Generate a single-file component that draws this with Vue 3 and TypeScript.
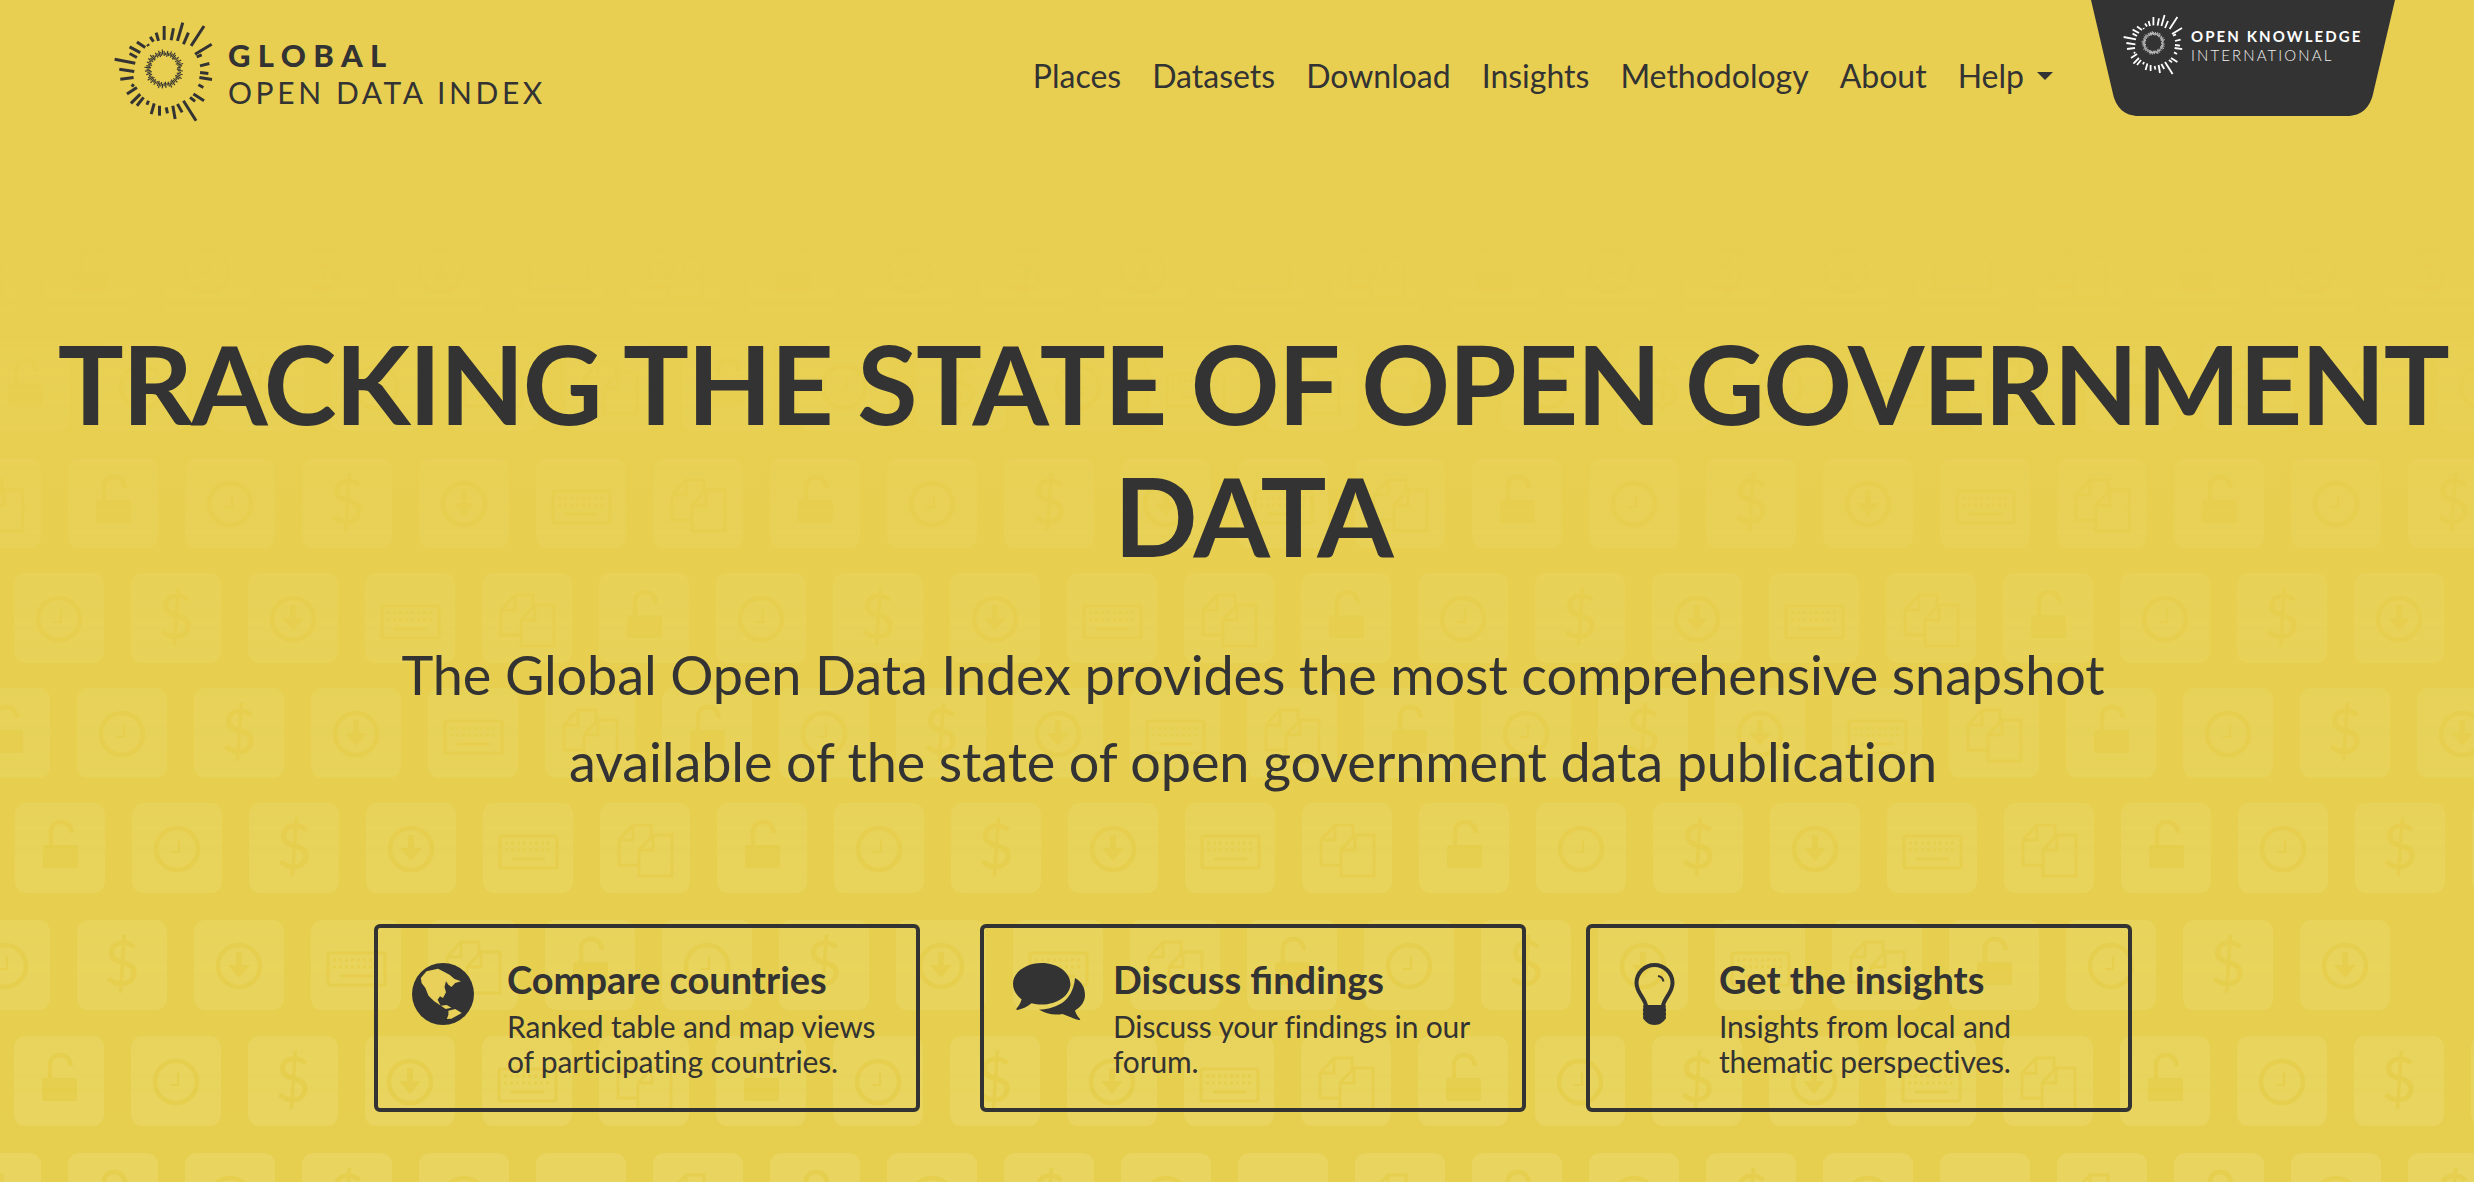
<script setup lang="ts">
const navItems = ['Places', 'Datasets', 'Download', 'Insights', 'Methodology', 'About']

// rays of the sunburst logo, drawn at 3x, centre at 222,215
const rays = [
  [222, 127, 222, 85], [243, 128, 250, 92], [262, 130, 278, 75], [280, 140, 295, 105], [303, 145, 342, 85],
  [315, 170, 365, 140], [320, 178, 335, 172], [330, 205, 358, 198], [330, 225, 355, 228], [328, 240, 366, 246],
  [325, 262, 340, 270], [310, 290, 342, 310], [300, 300, 315, 312], [280, 310, 318, 370], [262, 320, 276, 345],
  [248, 325, 255, 365], [228, 330, 232, 348], [208, 325, 208, 355], [192, 318, 183, 350], [175, 310, 170, 322],
  [160, 300, 140, 325], [150, 290, 122, 318], [140, 270, 110, 290], [130, 260, 125, 268], [130, 240, 90, 245],
  [132, 222, 87, 215], [135, 197, 73, 185], [140, 180, 118, 168], [150, 165, 118, 148], [165, 150, 140, 133],
  [175, 145, 172, 140], [190, 132, 180, 118], [205, 130, 198, 105],
]

const ticks = Array.from({ length: 64 }, (_, i) => {
  const a = (i / 64) * Math.PI * 2
  const inner = 38 + ((i * 7) % 5) * 1.5
  const outer = 50 + ((i * 11) % 7) * 1.6
  return [
    222 + Math.cos(a) * inner,
    215 + Math.sin(a) * inner,
    222 + Math.cos(a) * outer,
    215 + Math.sin(a) * outer,
  ]
})

// background tiles: every row is the same six icons, shifted
const iconNames = ['lock', 'clock', 'dollar', 'download', 'keyboard', 'copy']
const rowStarts: [number, number][] = [
  [225, 45], [341, -20], [458, 68], [573, -103], [688, -40], [803, 15], [920, -157], [1036, 14], [1153, 68],
]
const pitch = 117
const tiles = rowStarts.flatMap(([y, start]) =>
  Array.from({ length: 24 }, (_, i) => ({
    x: start - pitch * 2 + i * pitch,
    y,
    icon: iconNames[(i + 4) % 6],
  })),
)
</script>

<template>
  <div class="page">
    <svg class="defs" width="0" height="0">
      <defs>
        <symbol id="sunburst" viewBox="60 70 320 310">
          <line v-for="(r, i) in rays" :key="i" :x1="r[0]" :y1="r[1]" :x2="r[2]" :y2="r[3]" stroke="currentColor" stroke-width="9" />
          <line v-for="(t, i) in ticks" :key="'t' + i" :x1="t[0]" :y1="t[1]" :x2="t[2]" :y2="t[3]" stroke="currentColor" stroke-width="3.4" />
        </symbol>
        <symbol id="lock" viewBox="0 0 90 90">
          <rect class="solid" x="28" y="42" width="35" height="23" rx="2" />
          <path class="line" d="M36 43V29c0-6 4-10 10-10s10 4 11 11" stroke-width="4.5" />
        </symbol>
        <symbol id="clock" viewBox="0 0 90 90">
          <circle class="line" cx="45" cy="46" r="21" stroke-width="4.5" />
          <path class="line" d="M47 36v13h-8" stroke-width="2.2" />
        </symbol>
        <symbol id="dollar" viewBox="0 0 90 90">
          <text class="glyph" x="45" y="66" text-anchor="middle">$</text>
        </symbol>
        <symbol id="download" viewBox="0 0 90 90">
          <circle class="line" cx="45" cy="46" r="21" stroke-width="4.5" />
          <path class="solid" d="M42 32h6v13h8L45 58 34 45h8z" />
        </symbol>
        <symbol id="keyboard" viewBox="0 0 90 90">
          <rect class="line" x="17" y="33" width="57" height="32" rx="2" stroke-width="3.2" />
          <path class="line" d="M22 40h47M22 47h47" stroke-width="3" stroke-dasharray="3 3" />
          <path class="line" d="M29 56h33" stroke-width="3" />
        </symbol>
        <symbol id="copy" viewBox="0 0 90 90">
          <path class="line" d="M38 62H19V37l14-15h18v14M33 22v15H19" stroke-width="2.8" />
          <path class="line" d="M53 32h19v41H39V47zM53 32v15H39" stroke-width="2.8" />
        </symbol>
      </defs>
    </svg>

    <svg class="pattern" width="2474" height="1182">
      <g v-for="(t, i) in tiles" :key="i">
        <rect class="tile" :x="t.x" :y="t.y" width="90" height="90" rx="11" />
        <use :href="'#' + t.icon" :x="t.x" :y="t.y" width="90" height="90" />
      </g>
    </svg>

    <header class="topbar">
      <a class="brand">
        <svg class="brand-mark" width="107" height="103"><use href="#sunburst" /></svg>
        <span class="brand-text">
          <strong>GLOBAL</strong>
          <span>OPEN DATA INDEX</span>
        </span>
      </a>
      <nav class="nav">
        <a v-for="item in navItems" :key="item">{{ item }}</a>
        <a class="has-caret">Help<i class="caret"></i></a>
      </nav>
      <div class="oki">
        <svg class="oki-shape" width="304" height="116" viewBox="0 0 304 116">
          <path d="M0 0H304L282 94C279 107 271 116 256 116H48C33 116 25 107 22 94Z" />
        </svg>
        <svg class="oki-mark" width="64" height="62"><use href="#sunburst" /></svg>
        <span class="oki-text">
          <strong>OPEN KNOWLEDGE</strong>
          <span>INTERNATIONAL</span>
        </span>
      </div>
    </header>

    <main class="hero">
      <h1>TRACKING THE STATE OF OPEN GOVERNMENT DATA</h1>
      <p class="lede">The Global Open Data Index provides the most comprehensive snapshot<br />available of the state of open government data publication</p>

      <section class="cards">
        <a class="card">
          <span class="card-icon">
            <svg width="62" height="62" viewBox="0 0 62 62">
              <circle cx="31" cy="31" r="31" fill="#333" />
              <path fill="#e8d05a" d="M8.8 15 14.5 8.3 26 5.7 31 8.3 37.5 11.7 42.5 16 49 18.3 43.2 20 39.4 24 36.4 21.7 34 18.3 32.5 24 34 29.3 31 35 28 33.3 25.6 36.7 28.7 42.7 34.8 42 39.4 44.7 33.7 46 22.2 38.3 16.5 32.7 13.4 25 9.6 20Z" />
              <path fill="#e8d05a" d="M36.4 47.7 43.2 46 49.8 50 39.4 55.7 34.8 56 36.4 51.7Z" />
            </svg>
          </span>
          <span class="card-body">
            <strong>Compare countries</strong>
            <span>Ranked table and map views of participating countries.</span>
          </span>
        </a>
        <a class="card">
          <span class="card-icon">
            <svg width="72" height="57" viewBox="0 0 72 57">
              <path fill="#333" d="M28.7 0C44.5 0 57.4 9.3 57.4 20.8S44.5 41.6 28.7 41.6c-3.6 0-7-.5-10.2-1.4C14 44 9 46 4.5 47c-1.2.2-1.6-.7-.9-1.6 2.5-2.900 4.2-5.600 5-9.200C3.300 32.400 0 27 0 20.800 0 9.300 12.900 0 28.700 0Z" />
              <path fill="#333" d="M62 15C69 19 72 25 72 32 72 38.500 68 44 62 47.500 62.800 50.500 64.500 53.500 67 56 67.500 56.700 67 57.300 66 57 60 55.500 55 53 49.500 51 41 52.500 33 51 26 46.500 33 46.500 40 45 49 40 56 35 61 27 62 15Z" />
            </svg>
          </span>
          <span class="card-body">
            <strong>Discuss findings</strong>
            <span>Discuss your findings in our forum.</span>
          </span>
        </a>
        <a class="card">
          <span class="card-icon">
            <svg width="41" height="62" viewBox="0 0 41 62">
              <path fill="none" stroke="#333" stroke-width="4" d="M12 43C11 35 2.500 30 2.500 20a18 18 0 0 1 36 0C38.500 30 30 35 29 43" />
              <path fill="none" stroke="#333" stroke-width="2" d="M24 13c3 .5 5 2.500 5.500 5.500" />
              <path fill="#333" d="M10 42h21c1 0 1 2 .5 3 .8.800.8 3 0 4 .8.800.8 3 0 4 .8.800.5 3-.5 3.500C29 59 26 62 20.500 62S12 59 10 56.500c-1-.5-1.300-2.700-.5-3.500-.8-1-.8-3.200 0-4-.8-1-.8-3.200 0-4-.5-1-.5-3 .5-3Z" />
            </svg>
          </span>
          <span class="card-body">
            <strong>Get the insights</strong>
            <span>Insights from local and thematic perspectives.</span>
          </span>
        </a>
      </section>
    </main>
  </div>
</template>

<style scoped>
.page {
  position: relative;
  width: 2474px;
  height: 1182px;
  overflow: hidden;
  background: linear-gradient(#e9cf51, #e6ce4e);
  color: #333;
  font-family: Lato, 'Open Sans', sans-serif;
}

.defs {
  position: absolute;
}

.pattern {
  position: absolute;
  inset: 0;
  -webkit-mask-image: linear-gradient(transparent 200px, rgba(0, 0, 0, 0.4) 460px, rgba(0, 0, 0, 0.75) 800px, #000 1100px);
  mask-image: linear-gradient(transparent 200px, rgba(0, 0, 0, 0.4) 460px, rgba(0, 0, 0, 0.75) 800px, #000 1100px);
}

.tile {
  fill: #e8d45e;
}

.solid {
  fill: #e6ce4e;
}

.line {
  fill: none;
  stroke: #e6ce4e;
}

.glyph {
  fill: #e6ce4e;
  font-family: Lato, sans-serif;
  font-size: 62px;
  font-weight: 400;
}

.topbar {
  position: relative;
  display: flex;
  align-items: flex-start;
  height: 116px;
  padding-left: 110px;
}

.brand {
  display: flex;
  align-items: flex-start;
  gap: 11px;
  padding-top: 21px;
}

.brand-mark {
  color: #333;
}

.brand-text {
  display: flex;
  flex-direction: column;
  padding-top: 16px;
  font-size: 30px;
  line-height: 37px;
  letter-spacing: 3.6px;
}

.brand-text strong {
  font-size: 31px;
  font-weight: 900;
  letter-spacing: 7.4px;
}

.nav {
  display: flex;
  gap: 31px;
  margin-left: auto;
  margin-right: 38px;
  padding-top: 56px;
  font-size: 32px;
  line-height: 40px;
}

.has-caret {
  display: flex;
  align-items: center;
  gap: 13px;
}

.caret {
  width: 0;
  height: 0;
  border-left: 8px solid transparent;
  border-right: 8px solid transparent;
  border-top: 8px solid #333;
}

.oki {
  position: relative;
  flex: none;
  width: 304px;
  height: 116px;
  margin-right: 79px;
  color: #fff;
}

.oki-shape {
  position: absolute;
  inset: 0;
  fill: #333;
}

.oki-mark {
  position: absolute;
  left: 30px;
  top: 14px;
}

.oki-text {
  position: absolute;
  left: 100px;
  top: 27px;
  display: flex;
  flex-direction: column;
  white-space: nowrap;
  font-size: 15px;
  line-height: 19px;
  letter-spacing: 2.1px;
}

.oki-text strong {
  font-weight: 700;
}

.oki-text span {
  font-weight: 300;
  color: #f0f0f0;
}

.hero {
  position: relative;
  padding-left: 32px;
  text-align: center;
}

h1 {
  margin: 200px 0 0;
  font-size: 110px;
  line-height: 132px;
  font-weight: 700;
  letter-spacing: -1.6px;
}

.lede {
  margin: 51px 0 0;
  font-size: 54px;
  line-height: 87px;
  letter-spacing: -0.12px;
}

.cards {
  display: flex;
  justify-content: center;
  gap: 60px;
  margin-top: 119px;
  text-align: left;
}

.card {
  display: flex;
  box-sizing: border-box;
  width: 546px;
  height: 188px;
  border: 4px solid #333;
  border-radius: 6px;
}

.card-icon {
  flex: none;
  display: flex;
  justify-content: center;
  width: 129px;
  padding-top: 35px;
}

.card-body {
  display: flex;
  flex-direction: column;
  padding-top: 29px;
  padding-right: 30px;
  font-size: 30px;
  line-height: 35px;
  letter-spacing: -0.15px;
}

.card-body strong {
  margin-bottom: 8px;
  font-size: 38px;
  line-height: 44px;
  font-weight: 700;
  letter-spacing: 0;
}
</style>

<style>
body {
  background: #e8ce50;
}
</style>
